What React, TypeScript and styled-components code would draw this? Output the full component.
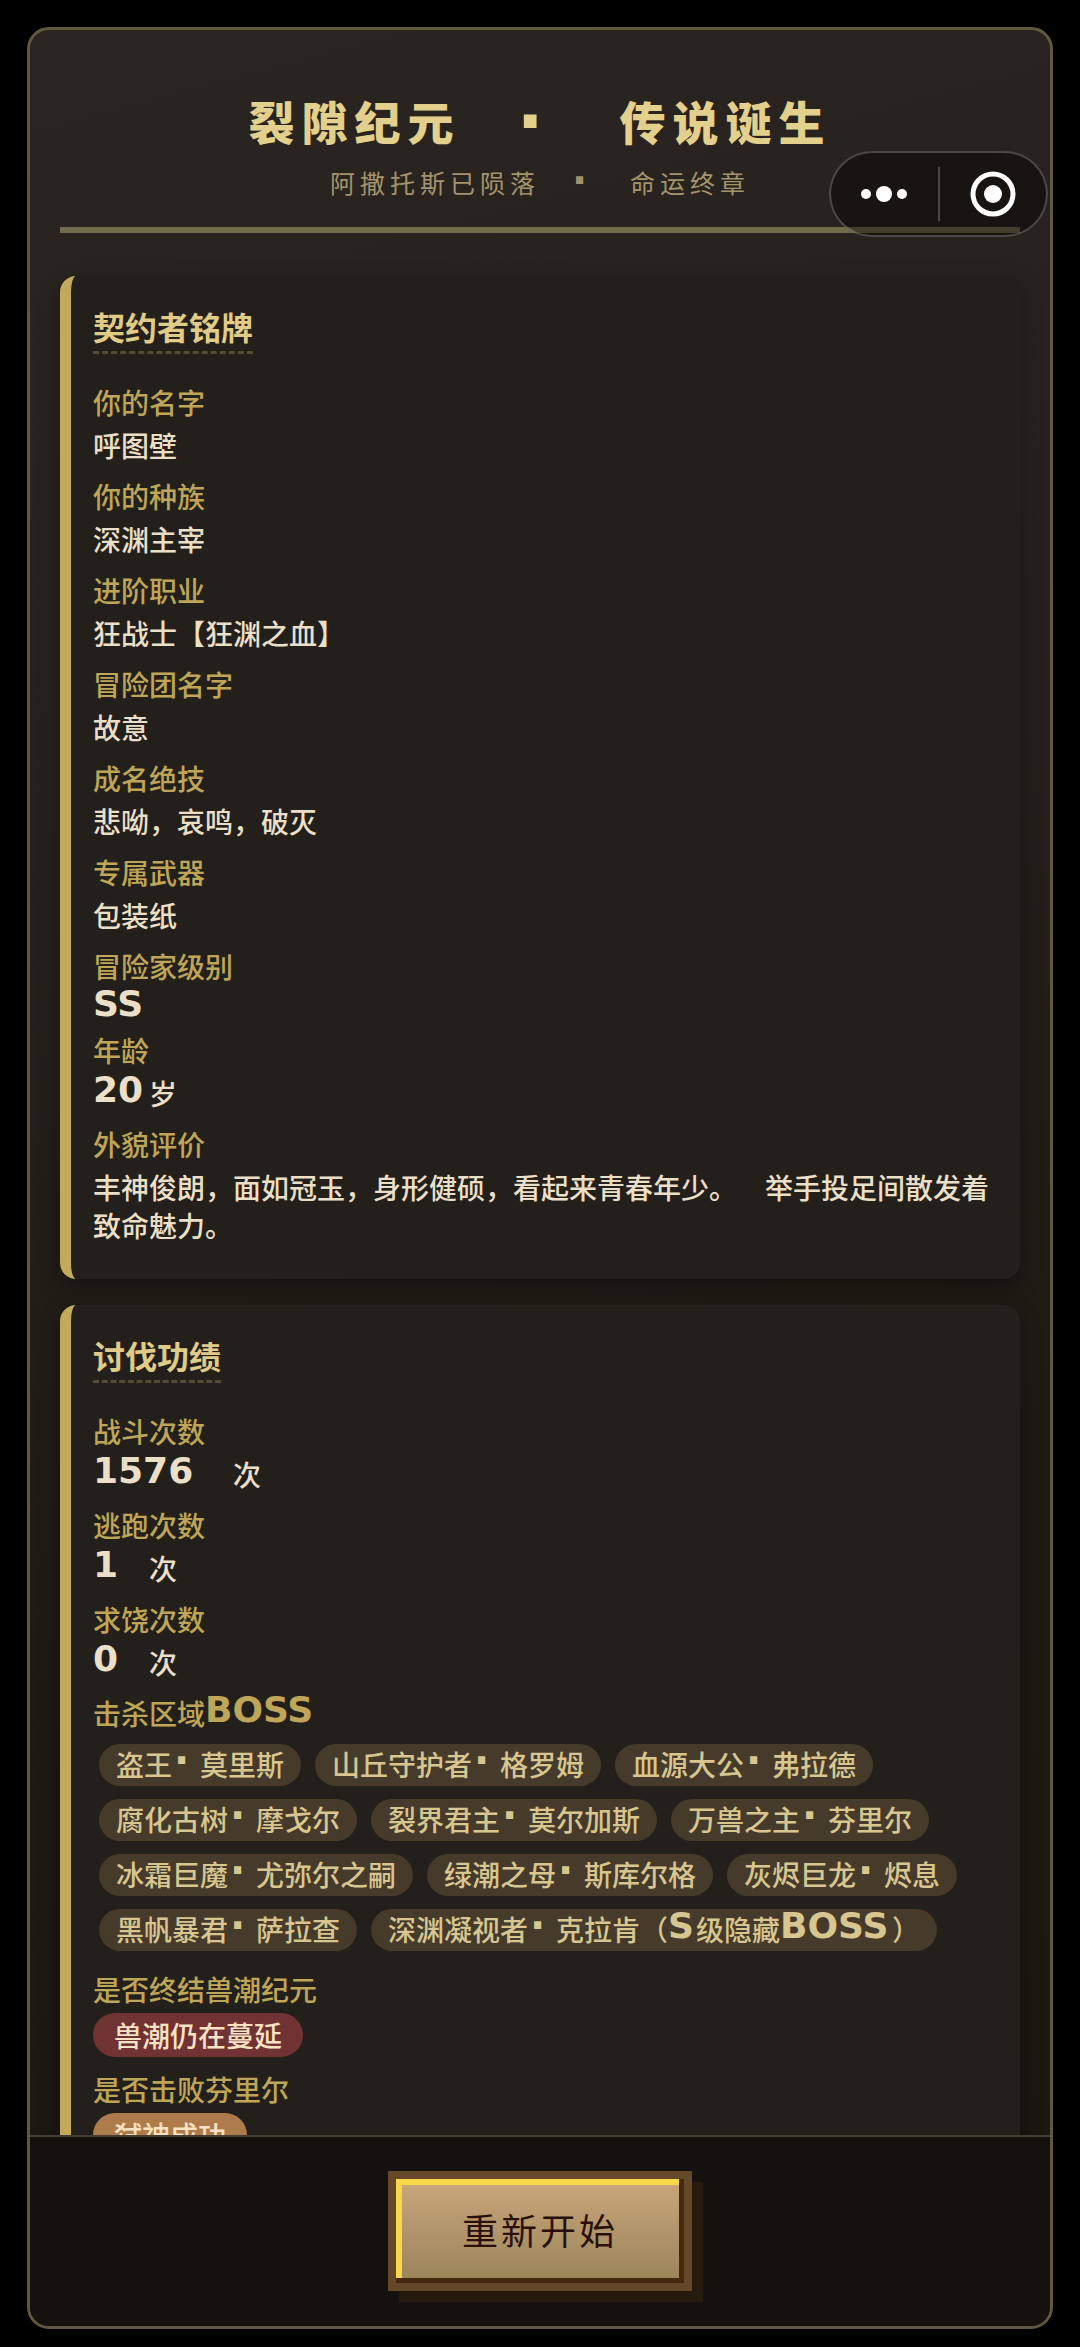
import React from "react";
import styled, { createGlobalStyle } from "styled-components";

const GlobalStyle = createGlobalStyle`
  *, *::before, *::after { box-sizing: border-box; }
  body {
    margin: 0;
    background: #000;
    font-family: "Noto Sans CJK SC", "Noto Sans", sans-serif;
    text-spacing-trim: space-all;
  }
`;

const Page = styled.div`
  height: 100vh;
  padding: 27px 27px 18px;
  background: #000;
`;

const Panel = styled.main`
  height: 100%;
  display: flex;
  flex-direction: column;
  overflow: hidden;
  border: 3px solid #60573f;
  border-radius: 22px;
  background: linear-gradient(165deg, #2b2521 0%, #25201b 35%, #1d1913 65%, #1a1610 100%);
`;

const ScrollArea = styled.div`
  flex: 1;
  min-height: 0;
  padding: 61px 30px 0;
  overflow-y: auto;
  scrollbar-width: none;
`;

const Header = styled.header`
  margin-bottom: 43px;
  padding-bottom: 27px;
  border-bottom: 6px solid #736a4c;
  text-align: center;
`;

const Title = styled.h1`
  margin: 0 0 15px;
  color: #e2d08c;
  font-size: 46px;
  font-weight: 900;
  line-height: 58px;
  letter-spacing: 7px;
`;

const Subtitle = styled.p`
  margin: 0;
  color: #a4946c;
  font-size: 25px;
  line-height: 36px;
  letter-spacing: 5px;
`;

const Section = styled.section`
  margin-bottom: 26px;
  padding: 30px 22px 22px;
  border-left: 11px solid #c3a95c;
  border-radius: 16px;
  background: #23201b;
  box-shadow: 0 8px 22px rgba(0, 0, 0, 0.3);
`;

const SectionTitle = styled.h2`
  width: fit-content;
  margin: 0 0 29px;
  padding-bottom: 4px;
  border-bottom: 3px dashed #544b34;
  color: #e0cb88;
  font-size: 32px;
  font-weight: 700;
  line-height: 41px;
`;

const Fields = styled.dl`
  margin: 0;
`;

const Field = styled.div`
  margin-bottom: 13px;
`;

const Label = styled.dt`
  margin-bottom: 5px;
  color: #bfa557;
  font-size: 28px;
  font-weight: 500;
  line-height: 38px;
`;

const Value = styled.dd`
  margin: 0;
  color: #ebdfc8;
  font-size: 28px;
  font-weight: 500;
  line-height: 38px;
`;

const Rank = styled(Value)`
  display: flex;
  line-height: 28px;
`;

const PixelBox = styled.span<{
  $cells: number;
  $size: number;
  $cell: number;
  $inset: number;
  $lift: number;
}>`
  display: inline-block;
  min-width: ${(p) => p.$cells * p.$cell}px;
  padding-left: ${(p) => p.$inset}px;
  font-family: "DejaVu Sans", sans-serif;
  font-size: ${(p) => p.$size}px;
  font-weight: 700;
  line-height: 28px;
  letter-spacing: 0;
  text-align: left;
  vertical-align: ${(p) => p.$lift}px;
`;

const Tags = styled.ul`
  display: flex;
  flex-wrap: wrap;
  gap: 13px 14px;
  margin: 0;
  padding: 7px 6px 6px;
  list-style: none;
`;

const Tag = styled.li`
  height: 42px;
  padding: 0 17px;
  border-radius: 21px;
  background: #463a2b;
  color: #d7c690;
  font-size: 28px;
  line-height: 40px;
  white-space: nowrap;
`;

const Badge = styled.span<{ $tone: "fail" | "win" }>`
  display: block;
  width: fit-content;
  padding: 0 21px;
  border-radius: 22px;
  background: ${(p) => (p.$tone === "fail" ? "#703232" : "#ad7c4a")};
  color: #f8e2c4;
  font-size: 28px;
  line-height: 44px;
`;

const Footer = styled.footer`
  display: flex;
  justify-content: center;
  padding: 34px 30px 35px;
  border-top: 2px solid #453c32;
  background: #15110e;
`;

const RestartButton = styled.button`
  height: 120px;
  padding: 0 66px 4px;
  border: 8px solid #65472a;
  background: linear-gradient(180deg, #caa77b 0%, #9a835a 100%);
  box-shadow: inset -5px -5px 0 #44290e, inset 6px 6px 0 #f8d84b, 11px 11px 0 #26190e;
  color: #2a100a;
  font-family: inherit;
  font-size: 36px;
  letter-spacing: 3px;
  cursor: pointer;
`;

const Capsule = styled.nav`
  position: fixed;
  top: 151px;
  right: 32px;
  display: flex;
  align-items: center;
  width: 219px;
  height: 86px;
  border: 2px solid rgba(255, 255, 255, 0.22);
  border-radius: 43px;
  background: rgba(0, 0, 0, 0.42);
`;

const CapsuleButton = styled.button`
  flex: 1;
  display: flex;
  align-items: center;
  justify-content: center;
  height: 100%;
  padding: 0;
  border: 0;
  background: none;
  cursor: pointer;
`;

const CapsuleDivider = styled.span`
  width: 2px;
  height: 54px;
  background: rgba(255, 255, 255, 0.22);
`;

function Pixel({ children }: { children: string }) {
  return (
    <PixelBox $cells={children.length} $size={36} $cell={28} $inset={0} $lift={3}>
      {children}
    </PixelBox>
  );
}

type DotProps = { size?: number; cell?: number; inset?: number; lift?: number };

function Dot({ size = 40, cell = 28, inset = 2, lift = 2 }: DotProps) {
  return (
    <PixelBox $cells={1} $size={size} $cell={cell} $inset={inset} $lift={lift}>
      ·
    </PixelBox>
  );
}

const profile: [string, string][] = [
  ["你的名字", "呼图壁"],
  ["你的种族", "深渊主宰"],
  ["进阶职业", "狂战士【狂渊之血】"],
  ["冒险团名字", "故意"],
  ["成名绝技", "悲呦，哀鸣，破灭"],
  ["专属武器", "包装纸"],
];

const counts: [string, string][] = [
  ["战斗次数", "1576"],
  ["逃跑次数", "1"],
  ["求饶次数", "0"],
];

const bosses: [string, string][] = [
  ["盗王", "莫里斯"],
  ["山丘守护者", "格罗姆"],
  ["血源大公", "弗拉德"],
  ["腐化古树", "摩戈尔"],
  ["裂界君主", "莫尔加斯"],
  ["万兽之主", "芬里尔"],
  ["冰霜巨魔", "尤弥尔之嗣"],
  ["绿潮之母", "斯库尔格"],
  ["灰烬巨龙", "烬息"],
  ["黑帆暴君", "萨拉查"],
];

export default function App() {
  return (
    <>
      <GlobalStyle />
      <Page>
        <Panel>
          <ScrollArea>
            <Header>
              <Title>
                裂隙纪元{"\u3000"}
                <Dot size={72} cell={53} inset={3} lift={-6} />
                {"\u3000"}传说诞生
              </Title>
              <Subtitle>
                阿撒托斯已陨落{"\u3000"}
                <Dot cell={30} lift={-1} />
                {"\u3000"}命运终章
              </Subtitle>
            </Header>

            <Section>
              <SectionTitle>契约者铭牌</SectionTitle>
              <Fields>
                {profile.map(([label, value]) => (
                  <Field key={label}>
                    <Label>{label}</Label>
                    <Value>{value}</Value>
                  </Field>
                ))}
                <Field>
                  <Label>冒险家级别</Label>
                  <Rank>
                    <Pixel>SS</Pixel>
                  </Rank>
                </Field>
                <Field>
                  <Label>年龄</Label>
                  <Value>
                    <Pixel>20</Pixel>岁
                  </Value>
                </Field>
                <Field>
                  <Label>外貌评价</Label>
                  <Value>
                    丰神俊朗，面如冠玉，身形健硕，看起来青春年少。{"\u3000"}举手投足间散发着致命魅力。
                  </Value>
                </Field>
              </Fields>
            </Section>

            <Section>
              <SectionTitle>讨伐功绩</SectionTitle>
              <Fields>
                {counts.map(([label, count]) => (
                  <Field key={label}>
                    <Label>{label}</Label>
                    <Value>
                      <Pixel>{count}</Pixel>
                      {"\u3000"}次
                    </Value>
                  </Field>
                ))}
                <Field>
                  <Label>
                    击杀区域<Pixel>BOSS</Pixel>
                  </Label>
                  <Value>
                    <Tags>
                      {bosses.map(([rank, name]) => (
                        <Tag key={name}>
                          {rank}
                          <Dot />
                          {name}
                        </Tag>
                      ))}
                      <Tag>
                        深渊凝视者
                        <Dot />
                        克拉肯（<Pixel>S</Pixel>级隐藏<Pixel>BOSS</Pixel>）
                      </Tag>
                    </Tags>
                  </Value>
                </Field>
                <Field>
                  <Label>是否终结兽潮纪元</Label>
                  <Value>
                    <Badge $tone="fail">兽潮仍在蔓延</Badge>
                  </Value>
                </Field>
                <Field>
                  <Label>是否击败芬里尔</Label>
                  <Value>
                    <Badge $tone="win">弑神成功</Badge>
                  </Value>
                </Field>
              </Fields>
            </Section>
          </ScrollArea>

          <Footer>
            <RestartButton type="button">重新开始</RestartButton>
          </Footer>
        </Panel>
      </Page>

      <Capsule>
        <CapsuleButton type="button" aria-label="更多">
          <svg width="46" height="18" viewBox="0 0 46 18" fill="#fff" aria-hidden="true">
            <circle cx="5" cy="9" r="5" />
            <circle cx="23" cy="9" r="8" />
            <circle cx="41" cy="9" r="5" />
          </svg>
        </CapsuleButton>
        <CapsuleDivider />
        <CapsuleButton type="button" aria-label="关闭">
          <svg width="46" height="46" viewBox="0 0 46 46" aria-hidden="true">
            <circle cx="23" cy="23" r="20" fill="none" stroke="#fff" strokeWidth="5" />
            <circle cx="23" cy="23" r="9" fill="#fff" />
          </svg>
        </CapsuleButton>
      </Capsule>
    </>
  );
}
